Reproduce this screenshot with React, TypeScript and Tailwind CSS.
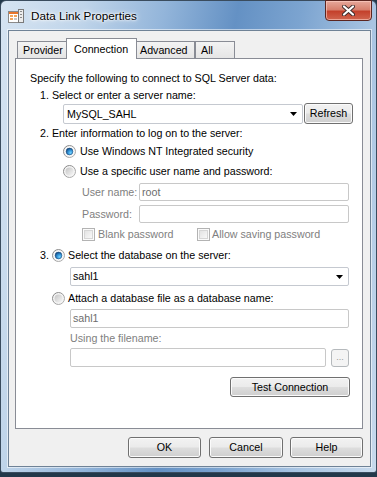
import React from "react";

function Radio({ checked }: { checked?: boolean }) {
  return (
    <svg width="13" height="13" viewBox="0 0 13 13" className="shrink-0">
      <defs>
        <linearGradient id="rOut" x1="0" y1="0" x2="1" y2="1">
          <stop offset="0" stopColor="#7d7d7d" />
          <stop offset="1" stopColor="#b9b9b9" />
        </linearGradient>
        <linearGradient id="rIn" x1="0" y1="0" x2="1" y2="1">
          <stop offset="0" stopColor="#c4c4c4" />
          <stop offset="1" stopColor="#f7f7f7" />
        </linearGradient>
        <radialGradient id="rDot" cx="0.65" cy="0.7" r="0.7">
          <stop offset="0" stopColor="#74d3ff" />
          <stop offset="0.55" stopColor="#2f8fd4" />
          <stop offset="1" stopColor="#17497f" />
        </radialGradient>
      </defs>
      <circle cx="6.5" cy="6.5" r="6" fill="#f4f4f4" stroke="url(#rOut)" strokeWidth="1" />
      {checked ? (
        <>
          <circle cx="6.5" cy="6.5" r="4.3" fill="#ffffff" />
          <circle cx="6.5" cy="6.5" r="3.4" fill="url(#rDot)" stroke="#1b4d7e" strokeWidth="0.6" />
        </>
      ) : (
        <circle cx="6.5" cy="6.5" r="4" fill="url(#rIn)" />
      )}
    </svg>
  );
}

function Check() {
  return (
    <svg width="13" height="13" viewBox="0 0 13 13" className="shrink-0">
      <defs>
        <linearGradient id="cIn" x1="0" y1="0" x2="1" y2="1">
          <stop offset="0" stopColor="#e2e2e2" />
          <stop offset="1" stopColor="#fafafa" />
        </linearGradient>
      </defs>
      <rect x="0.5" y="0.5" width="12" height="12" fill="#fbfbfb" stroke="#b3b3b3" />
      <rect x="2.5" y="2.5" width="8" height="8" fill="url(#cIn)" stroke="#d6d6d6" />
    </svg>
  );
}

function Arrow() {
  return (
    <svg width="7" height="4" viewBox="0 0 7 4" className="shrink-0">
      <path d="M0 0H7L3.5 4Z" fill="#000" />
    </svg>
  );
}

function Btn({ children, className }: { children: React.ReactNode; className: string }) {
  return (
    <div
      className={`flex items-center justify-center rounded-[3px] border border-[#707070] bg-[linear-gradient(#f2f2f2_0%,#ebebeb_48%,#dddddd_52%,#cfcfcf_100%)] shadow-[inset_0_0_0_1px_#fbfbfb] text-black ${className}`}
    >
      {children}
    </div>
  );
}

export default function App() {
  return (
    <div className="w-[377px] h-[477px] bg-[#22384a] overflow-hidden font-['Liberation_Sans',Arial,sans-serif] text-[10.7px] leading-none text-black">
      <div className="w-[377px] h-[473px] flex flex-col border border-[#3a4c5e] rounded-t-[6px] rounded-b-[3px] bg-[linear-gradient(100deg,#d6e4f2_0%,#c0d5ea_18%,#93b5da_36%,#6491c4_52%,#7ca4d0_66%,#a8c4e2_82%,#c8daed_100%)]">
        {/* Title bar */}
        <div className="h-[29px] flex items-start shrink-0">
          <div className="flex items-center h-[29px] pl-[7px]">
            <svg width="16" height="16" viewBox="0 0 16 16" className="shrink-0 mt-[1px]">
              <rect x="0.5" y="3.5" width="10" height="11" fill="#ffffff" stroke="#8a8a8a" />
              <rect x="1" y="4" width="9" height="2" fill="#e8762c" />
              <rect x="2" y="7" width="3" height="2" fill="#f3a45a" />
              <rect x="6" y="7" width="3" height="2" fill="#f3a45a" />
              <rect x="2" y="10" width="3" height="2" fill="#f3a45a" />
              <rect x="6" y="10" width="3" height="2" fill="#c8c8c8" />
              <rect x="10.5" y="1.5" width="5" height="13" fill="#ececec" stroke="#7a7a7a" />
              <rect x="12" y="3" width="2" height="1" fill="#8a8a8a" />
              <rect x="12" y="6" width="2" height="1" fill="#8a8a8a" />
              <rect x="12" y="9" width="2" height="1" fill="#8a8a8a" />
            </svg>
            <span className="ml-[7px] text-[11.7px] text-black [text-shadow:0_0_6px_#ffffff,0_0_3px_#ffffff,0_0_2px_#ffffff]">
              Data Link Properties
            </span>
          </div>
          <div className="flex-1" />
          <div className="mr-[4px] -mt-[1px] w-[47px] h-[21px] rounded-b-[4px] border border-[#5b2520] bg-[linear-gradient(#e6a89b_0%,#d7806e_45%,#c4412c_55%,#d0654f_100%)] shadow-[inset_0_0_0_1px_rgba(255,210,200,0.6)] flex items-center justify-center">
            <svg width="13" height="11" viewBox="0 0 13 11">
              <path d="M2 1.5L11 9.5M11 1.5L2 9.5" stroke="#3b2a2a" strokeWidth="4" strokeLinecap="round" />
              <path d="M2 1.5L11 9.5M11 1.5L2 9.5" stroke="#ffffff" strokeWidth="2.2" strokeLinecap="round" />
            </svg>
          </div>
        </div>

        {/* Client area */}
        <div className="ml-[7px] w-[363px] h-[437px] border border-[#6f8296] bg-[#f0f0f0] shadow-[0_0_0_1px_rgba(255,255,255,0.55)] flex flex-col pl-[6px] pt-[7px]">
          {/* Tabs */}
          <div className="relative z-10 h-[20px] flex items-end pl-[2px]">
            <div className="w-[49px] h-[17px] border-l border-t border-[#898c95] bg-[linear-gradient(#f3f3f3,#e5e5e5)] flex items-center pl-[5px] pt-[1px]">
              Provider
            </div>
            <div className="w-[71px] h-[21px] -mb-[1px] border-l border-t border-r border-[#898c95] bg-white flex items-start pl-[7px] pt-[5px]">
              Connection
            </div>
            <div className="w-[58px] h-[17px] border-t border-r border-[#898c95] bg-[linear-gradient(#f3f3f3,#e5e5e5)] flex items-center pl-[3px] pt-[1px]">
              Advanced
            </div>
            <div className="w-[40px] h-[17px] border-l border-t border-r border-[#898c95] bg-[linear-gradient(#f3f3f3,#e5e5e5)] flex items-center pl-[5px] pt-[1px]">
              All
            </div>
          </div>

          {/* Panel */}
          <div className="w-[348px] h-[371px] border border-[#898c95] bg-white flex flex-col">
            <div className="h-[14px] mt-[12px] pl-[14px] flex items-center">
              Specify the following to connect to SQL Server data:
            </div>
            <div className="h-[14px] mt-[3px] pl-[24px] flex items-center">1. Select or enter a server name:</div>
            <div className="h-[22px] mt-[1px] pl-[47px] flex items-start">
              <div className="mt-[1px] w-[240px] h-[20px] border border-[#c5c9d0] rounded-[2px] bg-white flex items-center pl-[3px] pr-[5px]">
                <span className="flex-1">MySQL_SAHL</span>
                <Arrow />
              </div>
              <Btn className="ml-[1px] w-[49px] h-[21px]">Refresh</Btn>
            </div>
            <div className="h-[14px] mt-[1px] pl-[24px] flex items-center">2. Enter information to log on to the server:</div>
            <div className="h-[14px] mt-[4px] pl-[47px] flex items-center">
              <Radio checked />
              <span className="ml-[4px]">Use Windows NT Integrated security</span>
            </div>
            <div className="h-[14px] mt-[6px] pl-[47px] flex items-center">
              <Radio />
              <span className="ml-[4px]">Use a specific user name and password:</span>
            </div>
            <div className="h-[18px] mt-[5px] pl-[66px] flex items-center">
              <span className="w-[57px] text-[#808080]">User name:</span>
              <div className="w-[210px] h-[18px] border border-[#c8c8c8] rounded-[2px] bg-white flex items-center pl-[2px] text-[#6d6d6d]">
                root
              </div>
            </div>
            <div className="h-[18px] mt-[4px] pl-[66px] flex items-center">
              <span className="w-[57px] text-[#808080]">Password:</span>
              <div className="w-[210px] h-[18px] border border-[#c8c8c8] rounded-[2px] bg-white" />
            </div>
            <div className="h-[14px] mt-[4px] pl-[66px] flex items-center text-[#808080]">
              <Check />
              <span className="ml-[3px] w-[99px]">Blank password</span>
              <Check />
              <span className="ml-[2px]">Allow saving password</span>
            </div>
            <div className="h-[14px] mt-[7px] pl-[24px] flex items-center">
              <span className="w-[12px]">3.</span>
              <Radio checked />
              <span className="ml-[3px]">Select the database on the server:</span>
            </div>
            <div className="h-[19px] mt-[5px] pl-[54px] flex items-center">
              <div className="w-[279px] h-[19px] border border-[#c5c9d0] rounded-[2px] bg-white flex items-center pl-[2px] pr-[5px]">
                <span className="flex-1">sahl1</span>
                <Arrow />
              </div>
            </div>
            <div className="h-[14px] mt-[5px] pl-[36px] flex items-center">
              <Radio />
              <span className="ml-[3px]">Attach a database file as a database name:</span>
            </div>
            <div className="h-[19px] mt-[4px] pl-[54px] flex items-center">
              <div className="w-[279px] h-[19px] border border-[#c8c8c8] rounded-[2px] bg-white flex items-center pl-[2px] text-[#6d6d6d]">
                sahl1
              </div>
            </div>
            <div className="h-[14px] mt-[3px] pl-[54px] flex items-center text-[#808080]">Using the filename:</div>
            <div className="h-[19px] mt-[3px] pl-[54px] flex items-center">
              <div className="w-[256px] h-[19px] border border-[#c8c8c8] rounded-[2px] bg-white" />
              <div className="ml-[5px] w-[18px] h-[18px] rounded-[3px] border border-[#b5b9bc] bg-[#f4f4f4] flex items-end justify-center pb-[4px] text-[#9a9a9a] text-[9px]">
                ...
              </div>
            </div>
            <div className="h-[20px] mt-[10px] pl-[214px] flex items-center">
              <Btn className="w-[120px] h-[20px]">Test Connection</Btn>
            </div>
          </div>

          {/* Bottom buttons */}
          <div className="mt-[8px] h-[21px] flex items-center pl-[113px]">
            <Btn className="w-[73px] h-[21px]">OK</Btn>
            <Btn className="ml-[8px] w-[74px] h-[21px]">Cancel</Btn>
            <Btn className="ml-[7px] w-[73px] h-[21px]">Help</Btn>
          </div>
        </div>
      </div>
    </div>
  );
}
